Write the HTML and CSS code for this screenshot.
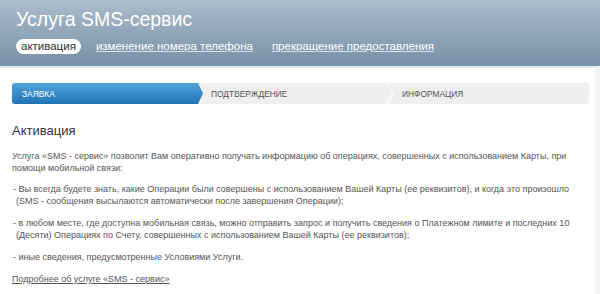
FILE: index.html
```html
<!DOCTYPE html>
<html lang="ru">
<head>
	<meta charset="UTF-8">
	<title>Услуга SMS-сервис</title>
	<link rel="stylesheet" href="styles.css">
</head>
<body>
	<div class="header">
		<h1>Услуга SMS-сервис</h1>
		<div class="tabs">
			<span class="tab current">активация</span>
			<a class="tab" href="#">изменение номера телефона</a>
			<a class="tab" href="#">прекращение предоставления</a>
		</div>
	</div>
	<div class="content">
		<div class="steps">
			<div class="step active">Заявка</div>
			<div class="step">Подтверждение</div>
			<div class="step last">Информация</div>
		</div>
		<h2>Активация</h2>
		<p>Услуга «SMS - сервис» позволит Вам оперативно получать информацию об операциях, совершенных с использованием Карты, при помощи мобильной связи:</p>
		<p class="item">- Вы всегда будете знать, какие Операции были совершены с использованием Вашей Карты (ее реквизитов), и когда это произошло (SMS - сообщения высылаются автоматически после завершения Операции);</p>
		<p class="item">- в любом месте, где доступна мобильная связь, можно отправить запрос и получить сведения о Платежном лимите и последних 10 (Десяти) Операциях по Счету, совершенных с использованием Вашей Карты (ее реквизитов);</p>
		<p class="item">- иные сведения, предусмотренные Условиями Услуги.</p>
		<p><a class="more" href="#">Подробнее об услуге «SMS - сервис»</a></p>
	</div>
</body>
</html>
```

FILE: styles.css
```css
body{
	margin: 0;
	font-family: "Liberation Sans", Arial, sans-serif;
	background: #fff;
	overflow: hidden;
}
.header{
	height: 66px;
	padding: 7px 16px 0;
	background: linear-gradient(#abbccc, #7790a6);
	box-sizing: border-box;
}
h1{
	margin: 0;
	font-size: 19.5px;
	font-weight: normal;
	color: #fff;
	line-height: 24px;
}
.tabs{
	display: flex;
	align-items: center;
	gap: 15px;
	margin-top: 8px;
}
.tab{
	font-size: 11.5px;
	color: #fff;
	line-height: 15px;
}
.tab.current{
	background: #fff;
	color: #333;
	border-radius: 8px;
	padding: 0 5px;
}
a.tab{
	text-decoration: underline;
	text-decoration-color: rgba(255,255,255,0.7);
}
a.tab + a.tab{
	margin-left: 4px;
}
.content{
	border-top: 2px solid #e3e8ed;
	border-right: 5px solid #f2f2f2;
	padding: 15px 6px 10px 12px;
	min-height: calc(100vh - 66px);
	box-sizing: border-box;
	color: #555;
}
.steps{
	display: flex;
	height: 21px;
	background: #efefef;
	border-radius: 3px;
	box-shadow: 0 0 2px #f2f2f2;
	font-size: 8.4px;
	text-transform: uppercase;
	color: #555;
}
.step{
	display: flex;
	align-items: center;
	width: 191px;
	padding-left: 8px;
	box-sizing: border-box;
	position: relative;
}
.step.last{
	flex: 1;
}
.step.active{
	padding-left: 10px;
	background: linear-gradient(#4fa3da, #1f74b5);
	color: #fff;
	border-radius: 3px 0 0 3px;
	clip-path: polygon(0 0, 186px 0, 191px 50%, 186px 100%, 0 100%);
}
.step.last::before{
	content: "";
	position: absolute;
	left: -8px;
	top: 0;
	width: 8px;
	height: 21px;
	background: #fff;
	opacity: 0.7;
	clip-path: polygon(0 0, 2px 0, 8px 50%, 2px 100%, 0 100%, 6px 50%);
}
h2{
	margin: 19px 0 12px;
	font-size: 13px;
	font-weight: normal;
	color: #333;
}
p{
	margin: 0 0 9px;
	font-size: 9px;
	line-height: 12px;
}
.item{
	padding-left: 1px;
	text-indent: -3px;
	margin-left: 3px;
	margin-bottom: 10px;
}
.more{
	color: #555;
}
```
